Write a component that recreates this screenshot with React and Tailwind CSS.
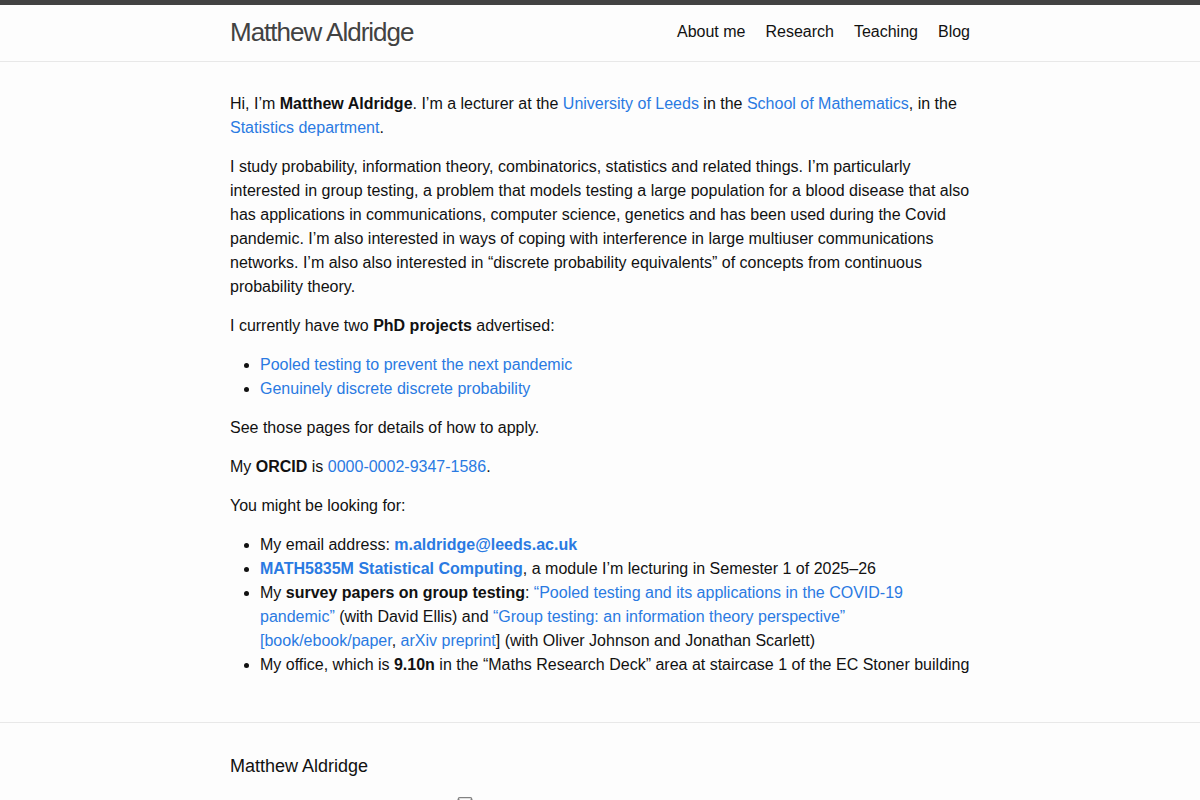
import { Mail } from "lucide-react";

const font = { fontFamily: '"Liberation Sans", Arial, sans-serif' };

function A({ children, bold }) {
  return (
    <a href="#" className={"text-[#2a7ae2] no-underline " + (bold ? "font-bold" : "")}>
      {children}
    </a>
  );
}

export default function App() {
  return (
    <div className="min-h-screen bg-[#fdfdfd] text-[#111] text-[16px] leading-[24px]" style={font}>
      <header className="border-t-[5px] border-t-[#424242] border-b border-b-[#e8e8e8]">
        <div className="w-[740px] h-[56px] mx-auto flex justify-between items-start">
          <a href="#" className="text-[26px] leading-[54px] tracking-[-1px] text-[#424242]">
            Matthew Aldridge
          </a>
          <nav className="flex gap-5 leading-[54px] text-[#111]">
            <a href="#">About me</a>
            <a href="#">Research</a>
            <a href="#">Teaching</a>
            <a href="#">Blog</a>
          </nav>
        </div>
      </header>

      <main className="py-[30px]">
        <div className="w-[740px] mx-auto">
          <p className="mb-[15px]">
            Hi, I’m <strong>Matthew Aldridge</strong>. I’m a lecturer at the{" "}
            <A>University of Leeds</A> in the <A>School of Mathematics</A>, in the{" "}
            <A>Statistics department</A>.
          </p>
          <p className="mb-[15px]">
            I study probability, information theory, combinatorics, statistics and related things. I’m
            particularly interested in group testing, a problem that models testing a large population
            for a blood disease that also has applications in communications, computer science,
            genetics and has been used during the Covid pandemic. I’m also interested in ways of coping
            with interference in large multiuser communications networks. I’m also also interested in
            “discrete probability equivalents” of concepts from continuous probability theory.
          </p>
          <p className="mb-[15px]">
            I currently have two <strong>PhD projects</strong> advertised:
          </p>
          <ul className="list-disc ml-[30px] mb-[15px]">
            <li>
              <A>Pooled testing to prevent the next pandemic</A>
            </li>
            <li>
              <A>Genuinely discrete discrete probability</A>
            </li>
          </ul>
          <p className="mb-[15px]">See those pages for details of how to apply.</p>
          <p className="mb-[15px]">
            My <strong>ORCID</strong> is <A>0000-0002-9347-1586</A>.
          </p>
          <p className="mb-[15px]">You might be looking for:</p>
          <ul className="list-disc ml-[30px] mb-[15px]">
            <li>
              My email address: <A bold>m.aldridge@leeds.ac.uk</A>
            </li>
            <li>
              <A bold>MATH5835M Statistical Computing</A>, a module I’m lecturing in Semester 1 of
              2025–26
            </li>
            <li>
              My <strong>survey papers on group testing</strong>:{" "}
              <A>“Pooled testing and its applications in the COVID-19 pandemic”</A> (with David Ellis)
              and <A>“Group testing: an information theory perspective”</A> <A>[book/ebook/paper</A>,{" "}
              <A>arXiv preprint</A>] (with Oliver Johnson and Jonathan Scarlett)
            </li>
            <li>
              My office, which is <strong>9.10n</strong> in the “Maths Research Deck” area at
              staircase 1 of the EC Stoner building
            </li>
          </ul>
        </div>
      </main>

      <footer className="border-t border-t-[#e8e8e8] py-[30px]">
        <div className="w-[740px] mx-auto">
          <h2 className="text-[18px] leading-[27px] mb-[15px]">Matthew Aldridge</h2>
          <div className="flex text-[15px] text-[#828282]">
            <div className="w-[227px]"></div>
            <div className="w-[148px] flex">
              <Mail size={16} strokeWidth={2} className="text-[#828282]" />
            </div>
            <div className="flex-1"></div>
          </div>
        </div>
      </footer>
    </div>
  );
}
